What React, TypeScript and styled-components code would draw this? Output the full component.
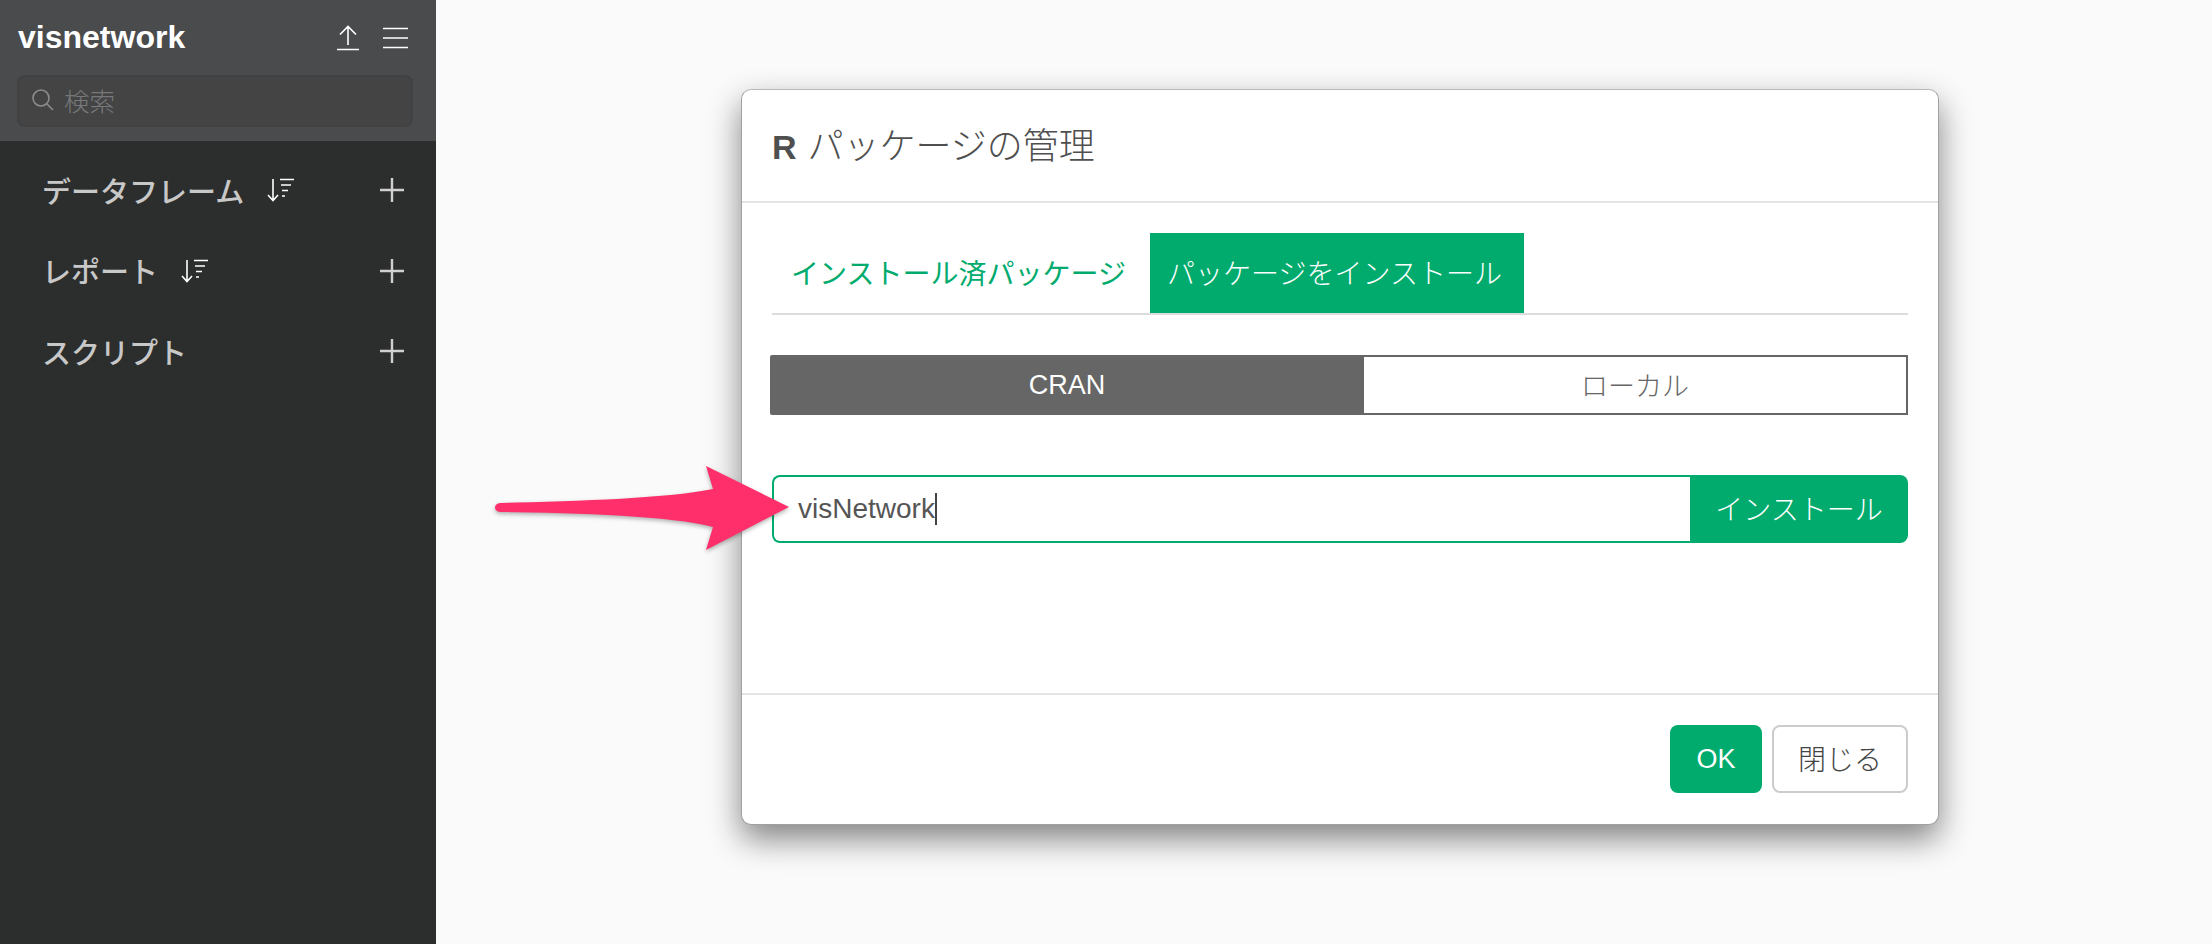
import React from "react";
import styled, { createGlobalStyle } from "styled-components";

const JP = `"Noto Sans CJK JP", "Liberation Sans", sans-serif`;
const LATIN = `"Liberation Sans", "Noto Sans CJK JP", sans-serif`;
const GREEN = "#01ab6d";

const Global = createGlobalStyle`
  html, body { margin: 0; padding: 0; background: #fafafa; }
  #root { width: 2212px; height: 944px; overflow: hidden; }
  * { box-sizing: border-box; }
`;

const Page = styled.div`
  position: relative;
  display: flex;
  width: 2212px;
  height: 944px;
  background: #fafafa;
  font-family: ${JP};
`;

const Sidebar = styled.aside`
  width: 436px;
  flex: none;
  background: #2c2e2d;
  display: flex;
  flex-direction: column;
`;

const SideHeader = styled.header`
  height: 141px;
  background: #4a4b4d;
  padding: 0 28px 0 17px;
  display: flex;
  flex-direction: column;
`;

const TitleRow = styled.div`
  height: 75px;
  display: flex;
  align-items: center;
  justify-content: space-between;
`;

const Title = styled.h1`
  margin: 0 0 2px 1px;
  font: 700 32px/1 ${LATIN};
  color: #fff;
`;

const HeaderIcons = styled.div`
  display: flex;
  align-items: center;
  gap: 24px;
  color: #fff;
`;

const SearchBox = styled.div`
  height: 52px;
  width: 396px;
  flex: none;
  border: 2px solid #404143;
  border-radius: 8px;
  background: #444445;
  display: flex;
  align-items: center;
  padding: 0 0 3px 13px;
  gap: 10px;
  color: #77787a;
  font-size: 25.5px;
  font-weight: 300;
`;

const NavList = styled.nav`
  display: flex;
  flex-direction: column;
  padding: 9px 32px 0 42px;
`;

const NavRow = styled.div`
  height: 80.5px;
  display: flex;
  align-items: center;
`;

const NavLabel = styled.span`
  font-size: 29px;
  font-weight: 500;
  color: #c8c8c8;
  line-height: 1;
`;

const SortWrap = styled.span`
  display: flex;
  margin-left: 23px;
  color: #fff;
`;

const PlusWrap = styled.span`
  display: flex;
  margin-left: auto;
  color: #d0d0d0;
`;

const Stage = styled.main`
  flex: 1;
  padding: 89px 0 0 305px;
`;

const Modal = styled.section`
  width: 1198px;
  height: 736px;
  background: #fff;
  border: 1px solid #a0a0a0;
  border-top-color: #b8b8b8;
  border-radius: 10px;
  box-shadow: 0 14px 32px rgba(0, 0, 0, 0.48);
  display: flex;
  flex-direction: column;
`;

const ModalHeader = styled.div`
  height: 113px;
  flex: none;
  border-bottom: 2px solid #e5e5e5;
  padding: 0 0 3px 30px;
  display: flex;
  align-items: center;
`;

const ModalTitle = styled.h2`
  margin: 0;
  font-size: 36px;
  font-weight: 300;
  color: #4f4f4f;
  line-height: 1;
  b { font: 700 34px/1 ${LATIN}; margin-right: 3px; }
`;

const ModalBody = styled.div`
  height: 492px;
  flex: none;
  padding: 30px 30px 0 28px;
  border-bottom: 2px solid #e5e5e5;
  display: flex;
  flex-direction: column;
`;

const Tabs = styled.div`
  display: flex;
  height: 82px;
  flex: none;
  border-bottom: 2px solid #dcdcdc;
  margin-left: 2px;
`;

const Tab = styled.div<{ $active?: boolean }>`
  height: 80px;
  display: flex;
  align-items: center;
  justify-content: center;
  padding: 0 5px 2px 0;
  font-size: 28px;
  font-weight: ${(p) => (p.$active ? 300 : 400)};
  width: ${(p) => (p.$active ? "374px" : "378px")};
  background: ${(p) => (p.$active ? GREEN : "transparent")};
  color: ${(p) => (p.$active ? "#fff" : GREEN)};
`;

const Segments = styled.div`
  display: flex;
  height: 60px;
  flex: none;
  margin-top: 40px;
`;

const Segment = styled.div<{ $active?: boolean }>`
  height: 60px;
  display: flex;
  align-items: center;
  justify-content: center;
  padding-bottom: ${(p) => (p.$active ? "0" : "2px")};
  font: 300 27px/1 ${LATIN};
  font-family: ${(p) => (p.$active ? LATIN : JP)};
  border: 2px solid #666;
  width: ${(p) => (p.$active ? "594px" : "544px")};
  flex: none;
  background: ${(p) => (p.$active ? "#666" : "#fff")};
  color: ${(p) => (p.$active ? "#fff" : "#666")};
  border-radius: ${(p) => (p.$active ? "2px 0 0 2px" : "0")};
  border-left-width: ${(p) => (p.$active ? "2px" : "0")};
`;

const InstallRow = styled.div`
  display: flex;
  height: 68px;
  flex: none;
  margin: 60px 0 0 2px;
`;

const TextField = styled.div`
  flex: 1;
  border: 2px solid ${GREEN};
  border-right: 0;
  border-radius: 8px 0 0 8px;
  display: flex;
  align-items: center;
  padding-left: 24px;
  font: 400 28px/1 ${LATIN};
  color: #555;
`;

const Caret = styled.span`
  display: inline-block;
  width: 2px;
  height: 32px;
  background: #444;
`;

const InstallButton = styled.button`
  width: 218px;
  border: 0;
  background: ${GREEN};
  color: #fff;
  border-radius: 0 8px 8px 0;
  font: 300 28px/1 ${JP};
  padding: 0 0 3px;
`;

const ModalFooter = styled.div`
  flex: 1;
  display: flex;
  justify-content: flex-end;
  gap: 10px;
  padding: 30px 30px 0 0;
`;

const OkButton = styled.button`
  width: 92px;
  height: 68px;
  border: 0;
  border-radius: 8px;
  background: ${GREEN};
  color: #fff;
  font: 400 27px/1 ${LATIN};
  padding: 0;
`;

const CloseButton = styled.button`
  width: 136px;
  height: 68px;
  border: 2px solid #ccc;
  border-radius: 8px;
  background: #fff;
  color: #444;
  font: 300 28px/1 ${JP};
  padding: 0 0 2px;
`;

const ArrowLayer = styled.svg`
  position: absolute;
  left: 481px;
  top: 450px;
  filter: drop-shadow(0 2px 2px rgba(0, 0, 0, 0.3));
`;

const UploadIcon = () => (
  <svg width="22" height="26" viewBox="0 0 22 26" fill="none" stroke="currentColor" strokeWidth="1.6">
    <path d="M0 24.5H22M11 20V2M3 9.5L11 1.5L19 9.5" />
  </svg>
);

const MenuIcon = () => (
  <svg width="25" height="22" viewBox="0 0 25 22" fill="none" stroke="currentColor" strokeWidth="1.6">
    <path d="M0 1.5H25M0 11H25M0 20.5H25" />
  </svg>
);

const SearchIcon = () => (
  <svg width="22" height="22" viewBox="0 0 22 22" fill="none" stroke="#8c8c8c" strokeWidth="1.6">
    <circle cx="9" cy="9" r="8" />
    <path d="M14.8 14.8L21 21" />
  </svg>
);

const SortIcon = () => (
  <svg width="28" height="24" viewBox="0 0 28 24" fill="none" stroke="currentColor" strokeWidth="1.6">
    <path d="M6 1V22M1 17L6 22.5L11 17" />
    <path d="M13 1.5H27M14 7H24M15 12.5H21M15 18H18" />
  </svg>
);

const PlusIcon = () => (
  <svg width="24" height="24" viewBox="0 0 24 24" fill="none" stroke="currentColor" strokeWidth="2.4">
    <path d="M12 0V24M0 12H24" />
  </svg>
);

const Arrow = () => (
  <ArrowLayer width="320" height="110" viewBox="0 0 320 110">
    <path
      d="M20 53 C 100 51 190 48 232 39 L 225 16 L 308 57 L 225 100 L 232 77 C 190 66 100 63 20 62 C 12 62 12 53 20 53 Z"
      fill="#ff2f6b"
    />
  </ArrowLayer>
);

export default function App() {
  return (
    <Page>
      <Global />
      <Sidebar>
        <SideHeader>
          <TitleRow>
            <Title>visnetwork</Title>
            <HeaderIcons>
              <UploadIcon />
              <MenuIcon />
            </HeaderIcons>
          </TitleRow>
          <SearchBox>
            <SearchIcon />
            検索
          </SearchBox>
        </SideHeader>
        <NavList>
          <NavRow>
            <NavLabel>データフレーム</NavLabel>
            <SortWrap><SortIcon /></SortWrap>
            <PlusWrap><PlusIcon /></PlusWrap>
          </NavRow>
          <NavRow>
            <NavLabel>レポート</NavLabel>
            <SortWrap><SortIcon /></SortWrap>
            <PlusWrap><PlusIcon /></PlusWrap>
          </NavRow>
          <NavRow>
            <NavLabel>スクリプト</NavLabel>
            <PlusWrap><PlusIcon /></PlusWrap>
          </NavRow>
        </NavList>
      </Sidebar>
      <Stage>
        <Modal>
          <ModalHeader>
            <ModalTitle><b>R</b> パッケージの管理</ModalTitle>
          </ModalHeader>
          <ModalBody>
            <Tabs>
              <Tab>インストール済パッケージ</Tab>
              <Tab $active>パッケージをインストール</Tab>
            </Tabs>
            <Segments>
              <Segment $active>CRAN</Segment>
              <Segment>ローカル</Segment>
            </Segments>
            <InstallRow>
              <TextField>visNetwork<Caret /></TextField>
              <InstallButton>インストール</InstallButton>
            </InstallRow>
          </ModalBody>
          <ModalFooter>
            <OkButton>OK</OkButton>
            <CloseButton>閉じる</CloseButton>
          </ModalFooter>
        </Modal>
      </Stage>
      <Arrow />
    </Page>
  );
}
